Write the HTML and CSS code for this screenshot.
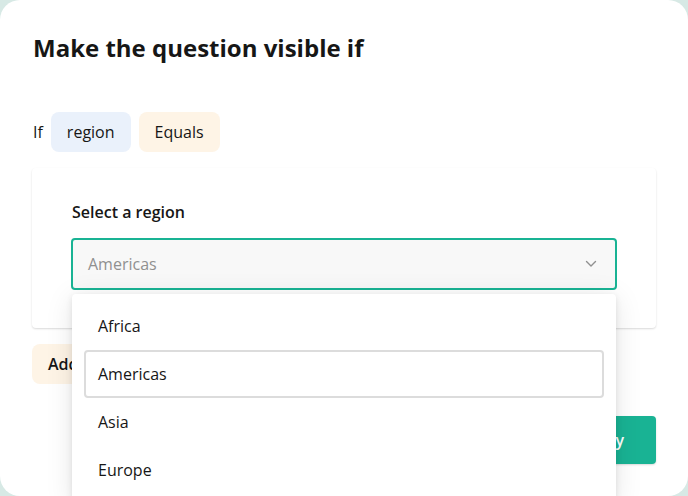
FILE: index.html
```html
<!DOCTYPE html>
<html lang="en">
<head>
<meta charset="utf-8">
<title>Make the question visible if</title>
<link rel="stylesheet" href="styles.css">
</head>
<body>
<div class="dialog">
  <h1 class="title">Make the question visible if</h1>
  <div class="cond-row">
    <span class="if">If</span>
    <span class="chip chip-blue">region</span>
    <span class="chip chip-orange">Equals</span>
  </div>
  <div class="card">
    <div class="label">Select a region</div>
    <div class="select-wrap">
      <div class="select">
        <span class="placeholder">Americas</span>
        <svg class="chevron" width="12" height="8" viewBox="0 0 12 8"><polyline points="1.5,1.5 6,6 10.5,1.5" fill="none" stroke="#909090" stroke-width="1.4" stroke-linecap="round" stroke-linejoin="round"/></svg>
      </div>
      <ul class="popup">
        <li class="item">Africa</li>
        <li class="item item-active">Americas</li>
        <li class="item">Asia</li>
        <li class="item">Europe</li>
      </ul>
    </div>
  </div>
  <div class="add-row">
    <button class="add-btn">Add condition</button>
  </div>
  <div class="footer">
    <button class="apply-btn">Apply</button>
  </div>
</div>
</body>
</html>
```

FILE: styles.css
```css
html, body {
  margin: 0;
  padding: 0;
}
body {
  width: 688px;
  height: 496px;
  overflow: hidden;
  background: #d7e9e5;
  font-family: "Open Sans", "Noto Sans", sans-serif;
  color: #161616;
}
.dialog {
  box-sizing: border-box;
  width: 688px;
  height: 496px;
  background: #ffffff;
  border-radius: 20px;
  padding: 32px 32px 0 32px;
}
.title {
  margin: 0 0 0 1px;
  font-size: 24px;
  line-height: 32px;
  font-weight: 700;
}
.cond-row {
  margin-top: 48px;
  display: flex;
  align-items: center;
  gap: 8px;
}
.if {
  font-size: 16px;
  line-height: 24px;
  margin-left: 1px;
}
.chip {
  font-size: 16px;
  line-height: 24px;
  padding: 8px 16px;
  border-radius: 8px;
}
.chip-blue {
  background: #eaf1fb;
}
.chip-orange {
  background: #fef4e6;
}
.card {
  margin-top: 16px;
  background: #ffffff;
  border-radius: 4px;
  box-shadow: 0 1px 2px rgba(0, 0, 0, 0.15);
  padding: 32px 40px 38px 40px;
}
.label {
  font-size: 16px;
  line-height: 24px;
  font-weight: 600;
  margin-bottom: 14px;
}
.select-wrap {
  position: relative;
}
.select {
  box-sizing: border-box;
  height: 52px;
  border: 2px solid #19b394;
  border-radius: 4px;
  background: #f8f8f8;
  display: flex;
  align-items: center;
  justify-content: space-between;
  padding: 0 18px 0 15px;
  margin-left: -1px;
  margin-right: -1px;
}
.placeholder {
  font-size: 16px;
  line-height: 24px;
  color: #909090;
}
.chevron {
  display: block;
}
.popup {
  position: absolute;
  left: 0;
  right: 0;
  top: 56px;
  margin: 0;
  list-style: none;
  background: #ffffff;
  border-radius: 4px;
  padding: 8px 12px;
  box-shadow: 0 2px 6px rgba(0, 0, 0, 0.1), 0 4px 28px rgba(0, 0, 0, 0.1);
  z-index: 10;
}
.item {
  box-sizing: border-box;
  height: 48px;
  font-size: 16px;
  line-height: 24px;
  padding: 10px 12px;
  border: 2px solid transparent;
  border-radius: 4px;
}
.item-active {
  border-color: #dcdcdc;
}
.add-row {
  margin-top: 16px;
  display: flex;
}
.add-btn {
  font-family: inherit;
  font-size: 16px;
  line-height: 24px;
  font-weight: 600;
  color: #161616;
  background: #fef4e6;
  border: none;
  border-radius: 8px;
  padding: 8px 16px;
}
.footer {
  margin-top: 32px;
  display: flex;
  justify-content: flex-end;
}
.apply-btn {
  font-family: inherit;
  font-size: 16px;
  line-height: 24px;
  font-weight: 600;
  color: #ffffff;
  background: #19b394;
  border: none;
  border-radius: 4px;
  padding: 12px 32px;
  box-shadow: 0 1px 2px rgba(0, 0, 0, 0.15);
}
```
